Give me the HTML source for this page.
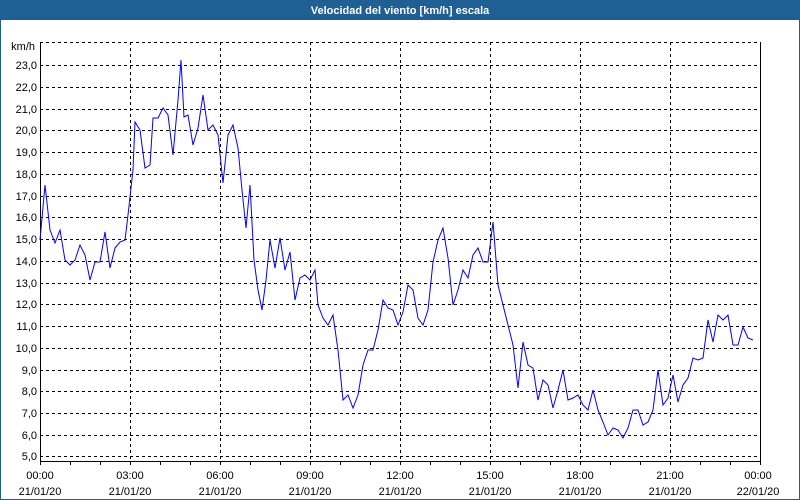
<!DOCTYPE html><html><head><style>
body{margin:0;width:800px;height:500px;overflow:hidden;background:#fff;font-family:"Liberation Sans",sans-serif}
</style></head><body>
<svg width="800" height="500" xmlns="http://www.w3.org/2000/svg" style="display:block">
<rect x="0" y="0" width="800" height="500" fill="#fff"/>
<rect x="0.5" y="0.5" width="799" height="499" fill="none" stroke="#1f5f94" stroke-width="1"/>
<rect x="0" y="0" width="800" height="20" fill="#1f5f94"/>
<text x="400" y="14" fill="#fff" font-size="11" font-weight="bold" text-anchor="middle" font-family="Liberation Sans, sans-serif">Velocidad del viento [km/h] escala</text>
<g font-size="11" fill="#000" font-family="Liberation Sans, sans-serif">
<text x="35" y="50" text-anchor="end">km/h</text>
<g id="grid" stroke="#000" stroke-dasharray="3,3" stroke-width="1">
<line x1="40" y1="42.5" x2="760" y2="42.5"/>
<line x1="40" y1="65.5" x2="760" y2="65.5"/><line x1="40" y1="87.5" x2="760" y2="87.5"/><line x1="40" y1="109.5" x2="760" y2="109.5"/><line x1="40" y1="130.5" x2="760" y2="130.5"/><line x1="40" y1="152.5" x2="760" y2="152.5"/><line x1="40" y1="174.5" x2="760" y2="174.5"/><line x1="40" y1="196.5" x2="760" y2="196.5"/><line x1="40" y1="217.5" x2="760" y2="217.5"/><line x1="40" y1="239.5" x2="760" y2="239.5"/><line x1="40" y1="261.5" x2="760" y2="261.5"/><line x1="40" y1="283.5" x2="760" y2="283.5"/><line x1="40" y1="304.5" x2="760" y2="304.5"/><line x1="40" y1="326.5" x2="760" y2="326.5"/><line x1="40" y1="348.5" x2="760" y2="348.5"/><line x1="40" y1="370.5" x2="760" y2="370.5"/><line x1="40" y1="391.5" x2="760" y2="391.5"/><line x1="40" y1="413.5" x2="760" y2="413.5"/><line x1="40" y1="435.5" x2="760" y2="435.5"/><line x1="40" y1="456.5" x2="760" y2="456.5"/>
<line x1="130.5" y1="42" x2="130.5" y2="461"/><line x1="220.5" y1="42" x2="220.5" y2="461"/><line x1="310.5" y1="42" x2="310.5" y2="461"/><line x1="400.5" y1="42" x2="400.5" y2="461"/><line x1="490.5" y1="42" x2="490.5" y2="461"/><line x1="580.5" y1="42" x2="580.5" y2="461"/><line x1="670.5" y1="42" x2="670.5" y2="461"/>
</g>
<g text-anchor="end">
<text x="37" y="69">23,0</text><text x="37" y="91">22,0</text><text x="37" y="113">21,0</text><text x="37" y="134">20,0</text><text x="37" y="156">19,0</text><text x="37" y="178">18,0</text><text x="37" y="200">17,0</text><text x="37" y="221">16,0</text><text x="37" y="243">15,0</text><text x="37" y="265">14,0</text><text x="37" y="287">13,0</text><text x="37" y="308">12,0</text><text x="37" y="330">11,0</text><text x="37" y="352">10,0</text><text x="37" y="374">9,0</text><text x="37" y="395">8,0</text><text x="37" y="417">7,0</text><text x="37" y="439">6,0</text><text x="37" y="460">5,0</text>
</g>
<path d="M40.5 42V461.5H760.5V42" fill="none" stroke="#000"/>
<path d="M40.5 461v4M70.5 461v4M100.5 461v4M130.5 461v4M160.5 461v4M190.5 461v4M220.5 461v4M250.5 461v4M280.5 461v4M310.5 461v4M340.5 461v4M370.5 461v4M400.5 461v4M430.5 461v4M460.5 461v4M490.5 461v4M520.5 461v4M550.5 461v4M580.5 461v4M610.5 461v4M640.5 461v4M670.5 461v4M700.5 461v4M730.5 461v4M760.5 461v4" stroke="#000"/>
<g text-anchor="middle">
<text x="40" y="479">00:00</text><text x="40" y="495">21/01/20</text>
<text x="130" y="479">03:00</text><text x="130" y="495">21/01/20</text>
<text x="220" y="479">06:00</text><text x="220" y="495">21/01/20</text>
<text x="310" y="479">09:00</text><text x="310" y="495">21/01/20</text>
<text x="400" y="479">12:00</text><text x="400" y="495">21/01/20</text>
<text x="490" y="479">15:00</text><text x="490" y="495">21/01/20</text>
<text x="580" y="479">18:00</text><text x="580" y="495">21/01/20</text>
<text x="670" y="479">21:00</text><text x="670" y="495">21/01/20</text>
<text x="758" y="479">00:00</text><text x="758" y="495">22/01/20</text>
</g>
</g>
<polyline fill="none" stroke="#0000ff" stroke-width="1" points="40,240 45,185 50,230 55,243 60,230 65,260 70,265 75,260 80,245 85,255 90,280 95,262 100,262 105,232 110,268 115,248 120,242 125,240 128,215 133,170 135,122 140,130 145,168 150,165 153,118 158,118 163,108 168,115 173,155 178,100 181,60 184,117 188,115 193,145 198,128 203,95 208,130 213,125 218,135 223,183 228,135 233,125 238,148 242,190 246,228 250,185 254,260 258,290 262,310 266,280 270,240 275,268 280,238 285,270 290,252 295,300 300,278 305,275 310,280 315,270 318,305 323,318 328,325 333,315 338,350 343,400 348,395 353,408 358,395 363,365 368,350 373,350 378,330 383,300 388,308 393,310 398,325 403,312 408,285 413,290 418,318 423,325 428,310 433,262 438,240 443,228 448,258 453,305 458,290 463,270 468,278 473,255 478,248 483,262 488,262 493,222 498,285 503,305 508,325 513,345 518,388 523,342 528,365 533,368 538,400 543,380 548,385 553,408 558,390 563,370 568,400 573,398 578,395 583,405 588,410 593,390 598,410 603,422 608,435 613,428 618,430 623,438 628,428 633,410 638,410 643,425 648,422 653,410 658,370 663,405 668,398 673,375 678,402 683,385 688,378 693,358 698,360 703,358 708,320 713,342 718,315 723,320 728,315 733,345 738,345 743,327 748,338 753,340"/>
</svg>
</body></html>
